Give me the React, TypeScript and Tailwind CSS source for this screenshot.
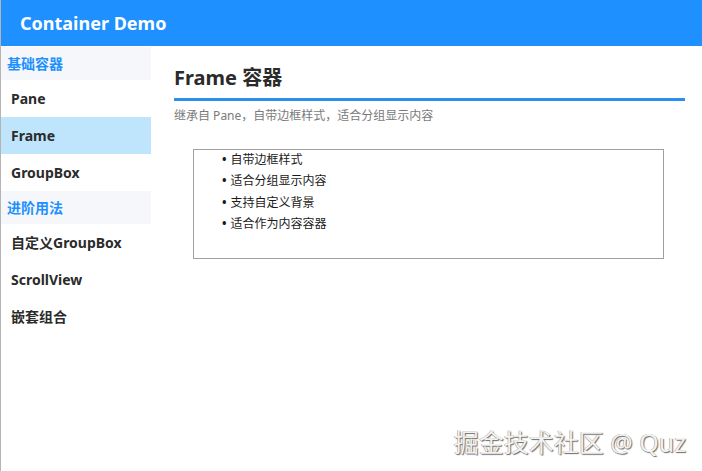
import React from 'react';

interface NavItem {
  label: string;
  group?: boolean;
  active?: boolean;
}

const nav: NavItem[] = [
  { label: '基础容器', group: true },
  { label: 'Pane' },
  { label: 'Frame', active: true },
  { label: 'GroupBox' },
  { label: '进阶用法', group: true },
  { label: '自定义GroupBox' },
  { label: 'ScrollView' },
  { label: '嵌套组合' }
];

const features = ['自带边框样式', '适合分组显示内容', '支持自定义背景', '适合作为内容容器'];

export default function App() {
  return (
    <div
      className="relative w-[702px] h-[471px] bg-white border-l border-[#b5b5b5] overflow-hidden flex flex-col"
      style={{ fontFamily: '"Noto Sans", "Noto Sans CJK SC", sans-serif' }}>

      <div className="h-[46px] shrink-0 bg-[#1e90ff] flex items-center pl-[19px]">
        <h1 className="text-white text-[18px] font-bold leading-none">Container Demo</h1>
      </div>

      <div className="flex flex-1">
        <div className="w-[150px] shrink-0 flex flex-col pt-px">
          {nav.map((item) =>
          item.group ?
          <div
            key={item.label}
            className="h-[33px] bg-[#f5f7fa] flex items-center pl-[6px] text-[14px] font-bold text-[#1e90ff]">
                {item.label}
              </div> :

          <div
            key={item.label}
            className={`h-[37px] flex items-center pl-[10px] text-[14px] font-bold text-[#2b2b2b] ${
            item.active ? 'bg-[#bee5fc]' : ''}`
            }>
                {item.label}
              </div>
          )}
        </div>

        <div className="flex-1 pl-[23px] pr-[17px] pt-[18px]">
          <h2 className="text-[20px] font-bold text-[#2b2b2b] leading-[28px]">Frame 容器</h2>
          <div className="mt-[6px] h-[3px] bg-[#2a8ff0]" />
          <p className="mt-[6px] text-[12px] text-[#7a7a7a] leading-[18px]">
            继承自 Pane，自带边框样式，适合分组显示内容
          </p>
          <div className="mt-[24px] ml-[19px] w-[471px] h-[110px] border border-[#a0a0a0] pl-[28px]">
            <ul className="text-[12px] text-[#1a1a1a]">
              {features.map((f) =>
              <li key={f} className="h-[21.5px] flex items-center gap-[4px] first:-mt-[1px]">
                  <span className="text-[12px] font-bold">•</span>
                  <span>{f}</span>
                </li>
              )}
            </ul>
          </div>
        </div>
      </div>

      <div
        className="absolute right-[16px] bottom-[16px] text-[25px] text-[#f2f2f2] leading-none"
        style={{ textShadow: '1px 1px 1px #6b6b6b, -0.5px -0.5px 0 #9a9a9a' }}>
        掘金技术社区 @ Quz
      </div>
    </div>);

}
